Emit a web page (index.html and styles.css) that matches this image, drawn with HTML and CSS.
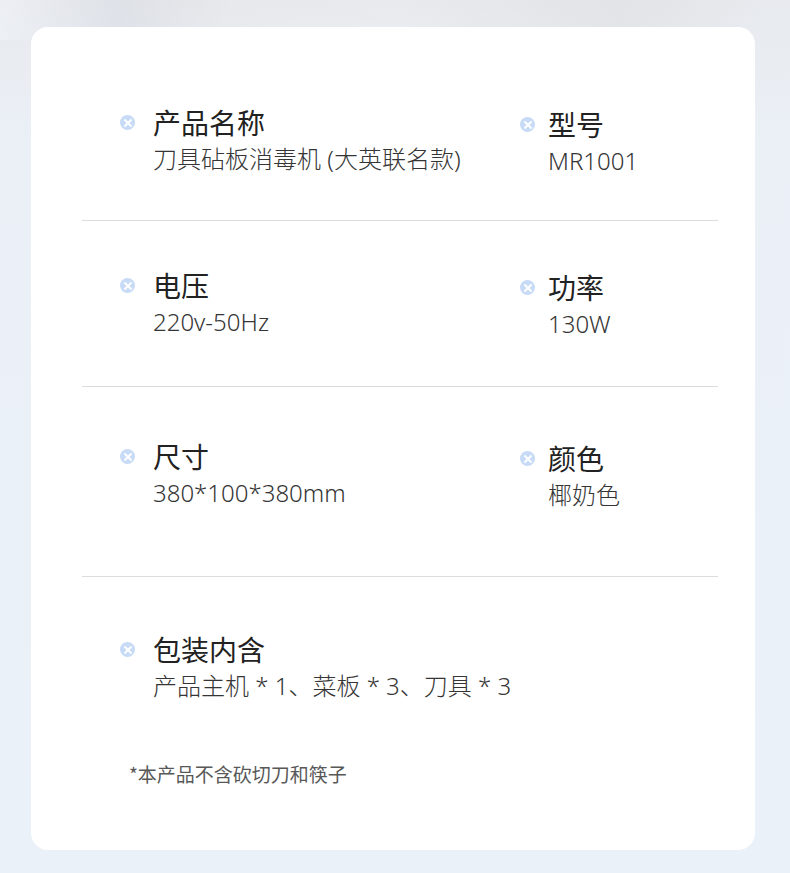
FILE: index.html
```html
<!DOCTYPE html>
<html lang="zh-CN">
<head>
<meta charset="utf-8">
<title>产品参数</title>
<link rel="stylesheet" href="styles.css">
</head>
<body>
<div class="page">
  <div class="card">
    <div class="row row-1">
      <div class="item">
        <span class="dot"></span>
        <div class="text">
          <div class="title">产品名称</div>
          <div class="value">刀具砧板消毒机 (大英联名款)</div>
        </div>
      </div>
      <div class="item item-right">
        <span class="dot"></span>
        <div class="text">
          <div class="title">型号</div>
          <div class="value">MR1001</div>
        </div>
      </div>
    </div>
    <div class="row row-2">
      <div class="item">
        <span class="dot"></span>
        <div class="text">
          <div class="title">电压</div>
          <div class="value">220v-50Hz</div>
        </div>
      </div>
      <div class="item item-right">
        <span class="dot"></span>
        <div class="text">
          <div class="title">功率</div>
          <div class="value">130W</div>
        </div>
      </div>
    </div>
    <div class="row row-3">
      <div class="item">
        <span class="dot"></span>
        <div class="text">
          <div class="title">尺寸</div>
          <div class="value">380*100*380mm</div>
        </div>
      </div>
      <div class="item item-right">
        <span class="dot"></span>
        <div class="text">
          <div class="title">颜色</div>
          <div class="value">椰奶色</div>
        </div>
      </div>
    </div>
    <div class="row row-4">
      <div class="item item-wide">
        <span class="dot"></span>
        <div class="text">
          <div class="title">包装内含</div>
          <div class="value">产品主机 * 1、菜板 * 3、刀具 * 3</div>
        </div>
      </div>
      <div class="note">*本产品不含砍切刀和筷子</div>
    </div>
  </div>
</div>
</body>
</html>
```

FILE: styles.css
```css
html, body {
  margin: 0;
  padding: 0;
}
body {
  width: 790px;
  height: 873px;
  overflow: hidden;
  font-family: "Noto Sans CJK SC", "Noto Sans", sans-serif;
  background:
    linear-gradient(to right, rgba(240,243,248,0.6) 0, rgba(214,218,226,0.5) 120px, rgba(232,234,236,0.3) 230px, rgba(238,241,245,0.2) 400px, rgba(224,224,226,0.6) 620px, rgba(232,236,242,0.4) 760px) top / 100% 40px no-repeat,
    linear-gradient(to bottom, #e6e8eb 0, #e8ebef 30px, #ebf0f7 140px, #ebf1f8 100%);
}
.page {
  padding: 27px 35px 0 31px;
}
.card {
  width: 724px;
  height: 823px;
  box-sizing: border-box;
  background: #ffffff;
  border-radius: 17px;
  padding: 0 37px 0 51px;
}
.row {
  display: grid;
  grid-template-columns: 400px 1fr;
  padding-left: 38px;
  border-bottom: 1px solid #dcdcdc;
}
.row-1 { padding-top: 77px; padding-bottom: 44px; }
.row-2 { padding-top: 46px; padding-bottom: 47px; }
.row-3 { padding-top: 51px; padding-bottom: 66px; }
.row-4 { padding-top: 54px; border-bottom: none; display: block; }

.item {
  display: flex;
  align-items: flex-start;
  gap: 18px;
}
.item-right {
  gap: 13px;
  padding-top: 2px;
}
.dot {
  flex: none;
  width: 15px;
  height: 15px;
  margin-top: 11px;
  border-radius: 50%;
  background: #c7daf6;
  position: relative;
}
.dot::before,
.dot::after {
  content: "";
  position: absolute;
  left: 50%;
  top: 50%;
  width: 10px;
  height: 2px;
  background: #ffffff;
  transform: translate(-50%, -50%) rotate(45deg);
}
.dot::after {
  transform: translate(-50%, -50%) rotate(-45deg);
}
.title {
  font-size: 28px;
  line-height: 36px;
  color: #222222;
  font-weight: 400;
}
.value {
  margin-top: 3px;
  font-family: "Noto Sans", "Noto Sans CJK SC", sans-serif;
  font-size: 24px;
  line-height: 31px;
  color: #353535;
  font-weight: 300;
}
.note {
  margin-top: 60px;
  margin-left: 9px;
  font-size: 19px;
  line-height: 26px;
  color: #585858;
}
```
